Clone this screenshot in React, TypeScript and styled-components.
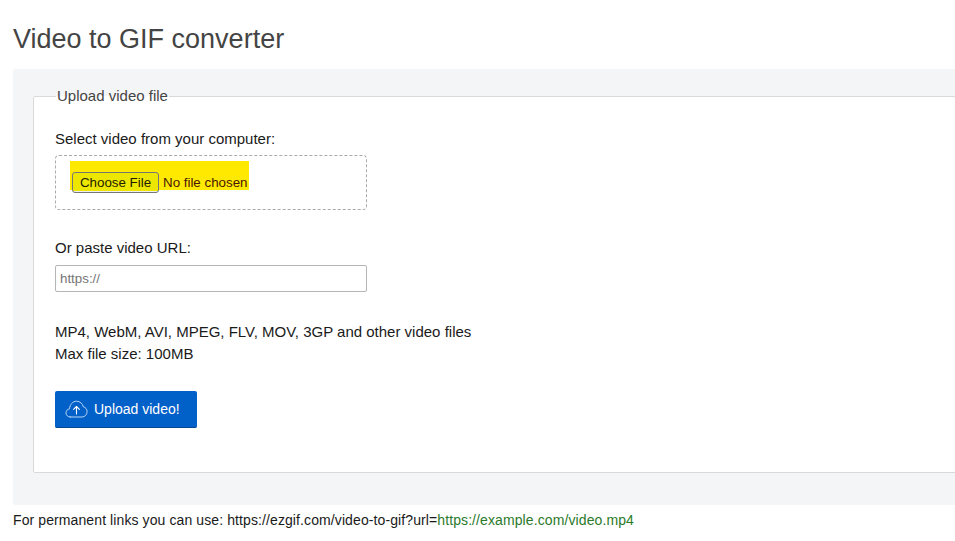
import React from 'react'
import styled, { createGlobalStyle } from 'styled-components'

const GlobalStyle = createGlobalStyle`
  html, body {
    margin: 0;
    padding: 0;
    background: #fff;
    overflow: hidden;
  }
  body {
    font-family: "Liberation Sans", Arial, sans-serif;
    font-size: 15px;
    color: #1a1a1a;
  }
`

const Page = styled.div`
  width: 955px;
  height: 541px;
  padding-left: 13px;
  box-sizing: border-box;
  overflow: hidden;
`

const Title = styled.h1`
  margin: 0;
  padding-top: 22px;
  height: 69px;
  box-sizing: border-box;
  font-size: 27px;
  line-height: 34px;
  font-weight: 400;
  color: #444;
`

const Panel = styled.div`
  width: 1000px;
  height: 436px;
  box-sizing: border-box;
  padding: 19px 20px 0;
  background: #f4f5f7;
  border-radius: 2px;
`

const Fieldset = styled.fieldset`
  margin: 0;
  padding: 27px 21px 0;
  height: 385px;
  box-sizing: border-box;
  background: #fff;
  border: 1px solid #d9d9d9;
  border-radius: 2px;
`

const Legend = styled.legend`
  margin-left: 1px;
  padding: 0 1px;
  font-size: 15px;
  line-height: 16px;
  color: #444;
`

const Label = styled.div`
  font-size: 15px;
  line-height: 16px;
  color: #1a1a1a;
`

const DropZone = styled.div`
  display: flex;
  align-items: flex-start;
  width: 312px;
  height: 55px;
  margin-top: 8px;
  padding: 5px 0 0 14px;
  box-sizing: border-box;
  border: 1px dashed #aaa;
  border-radius: 4px;
`

const FileField = styled.div`
  display: flex;
  align-items: flex-start;
  height: 29px;
  width: 179px;
  padding: 11px 0 0 2px;
  box-sizing: border-box;
  background: #ffe900;
  font-size: 13.33px;
  line-height: 21px;
  color: #4a1800;
`

const FileButton = styled.button`
  flex: none;
  width: 87px;
  height: 21px;
  margin-right: 4px;
  padding: 0;
  box-sizing: border-box;
  background: linear-gradient(#ece600 18px, #efefef 18px);
  border: 1px solid #767676;
  border-radius: 3px;
  font-family: inherit;
  font-size: 13.33px;
  color: #1f1c00;
`

const UrlLabel = styled(Label)`
  margin-top: 30px;
`

const UrlInput = styled.input`
  display: block;
  width: 312px;
  height: 27px;
  margin-top: 9px;
  padding: 0 4px;
  box-sizing: border-box;
  background: #fff;
  border: 1px solid #b5b5b5;
  border-radius: 2px;
  font-family: inherit;
  font-size: 13.33px;

  &::placeholder {
    color: #757575;
    opacity: 1;
  }
`

const Info = styled.p`
  margin: 29px 0 0;
  font-size: 15px;
  line-height: 22px;
  color: #1a1a1a;
`

const UploadButton = styled.button`
  display: flex;
  align-items: center;
  gap: 6px;
  width: 142px;
  height: 37px;
  margin-top: 26px;
  padding: 0 0 0 10px;
  box-sizing: border-box;
  background: #0260c9;
  border: 0;
  border-bottom: 1px solid #01478f;
  border-radius: 2px;
  font-family: inherit;
  font-size: 14px;
  color: #fff;
`

const Footer = styled.div`
  margin-top: 7px;
  font-size: 14px;
  letter-spacing: 0.1px;
  line-height: 16px;
  color: #1a1a1a;
`

const SampleUrl = styled.span`
  color: #2b7a2b;
`

const CloudIcon = () => (
  <svg width="23" height="18" viewBox="0 0 23 18" fill="none" strokeLinecap="round" strokeLinejoin="round">
    <path
      stroke="#b9d5f3"
      strokeWidth="1"
      d="M5.2 17C2.8 17 1 15.2 1 12.9c0-2.1 1.5-3.8 3.5-4.1C4.9 4.4 7.8 1.2 11.5 1.2c3.4 0 6.2 2.4 6.9 5.7 2.1.4 3.7 2.3 3.7 4.6 0 3-2.2 5.5-5 5.5H5.2z"
    />
    <path stroke="#fff" strokeWidth="1.1" d="M11.5 14V6.6M8.6 9.4l2.9-2.9 2.9 2.9" />
  </svg>
)

export default function App() {
  return (
    <>
      <GlobalStyle />
      <Page>
        <Title>Video to GIF converter</Title>
        <Panel>
          <Fieldset>
            <Legend>Upload video file</Legend>
            <Label>Select video from your computer:</Label>
            <DropZone>
              <FileField>
                <FileButton type="button">Choose File</FileButton>
                No file chosen
              </FileField>
            </DropZone>
            <UrlLabel>Or paste video URL:</UrlLabel>
            <UrlInput type="text" placeholder="https://" />
            <Info>
              MP4, WebM, AVI, MPEG, FLV, MOV, 3GP and other video files
              <br />
              Max file size: 100MB
            </Info>
            <UploadButton type="button">
              <CloudIcon />
              Upload video!
            </UploadButton>
          </Fieldset>
        </Panel>
        <Footer>
          For permanent links you can use: https://ezgif.com/video-to-gif?url=
          <SampleUrl>https://example.com/video.mp4</SampleUrl>
        </Footer>
      </Page>
    </>
  )
}
